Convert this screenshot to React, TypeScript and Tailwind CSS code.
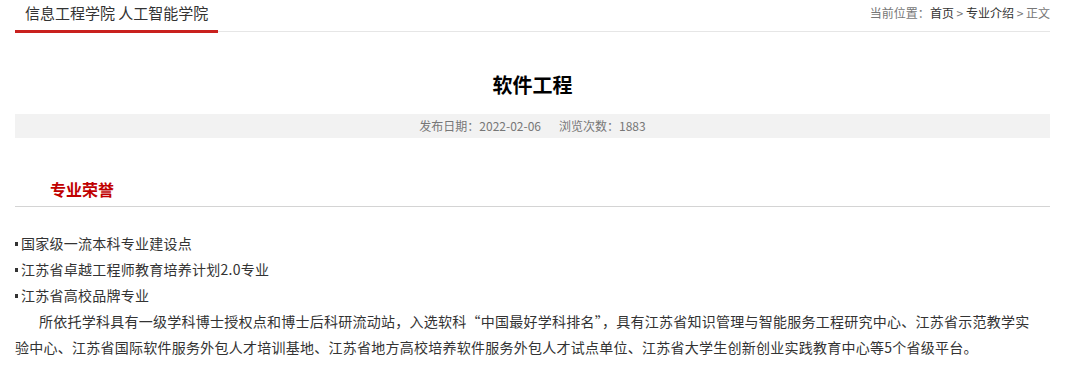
export default function App() {
  const font = { fontFamily: '"Noto Sans CJK SC", "Noto Sans", sans-serif' };
  return (
    <div className="w-[1080px] h-[367px] bg-white overflow-hidden text-[#333]" style={font}>
      <div className="mx-[15px] w-[1035px]">
        {/* header */}
        <div className="flex justify-between items-start border-b border-[#e6e6e6] h-[32px]">
          <div className="relative z-10 h-[33px] px-[10px] border-b-[3px] border-[#c9211e] text-[15px] leading-[26px] text-[#333]">
            信息工程学院 人工智能学院
          </div>
          <div className="text-[12px] leading-[26px] text-[#777]">
            当前位置：<span className="text-[#333]">首页</span> &gt; <span className="text-[#333]">专业介绍</span> &gt; 正文
          </div>
        </div>

        {/* title */}
        <h1 className="mt-[38px] text-center text-[20px] leading-[30px] font-bold text-black">软件工程</h1>
        <div className="mt-[14px] h-[24px] bg-[#f2f2f2] flex justify-center gap-[18px] text-[12px] leading-[24px] text-[#777]">
          <span>发布日期：2022-02-06</span>
          <span>浏览次数：1883</span>
        </div>

        {/* section */}
        <div className="mt-[39px] border-b border-[#d4d4d4] pb-[5px] pl-[35px]">
          <h2 className="text-[16px] leading-[24px] font-bold text-[#c00000]">专业荣誉</h2>
        </div>

        <div className="mt-[23px] text-[14px] leading-[26px] tracking-[0.25px] text-[#333]">
          {["国家级一流本科专业建设点", "江苏省卓越工程师教育培养计划2.0专业", "江苏省高校品牌专业"].map((t) => (
            <div key={t} className="flex items-center">
              <span className="inline-block w-[3px] h-[4px] bg-[#333] mr-[3px] mt-[2px]"></span>
              {t}
            </div>
          ))}
          <p className="indent-[24px]">
            所依托学科具有一级学科博士授权点和博士后科研流动站，入选软科“中国最好学科排名”，具有江苏省知识管理与智能服务工程研究中心、江苏省示范教学实<br />
            验中心、江苏省国际软件服务外包人才培训基地、江苏省地方高校培养软件服务外包人才试点单位、江苏省大学生创新创业实践教育中心等5个省级平台。
          </p>
        </div>
      </div>
    </div>
  );
}
